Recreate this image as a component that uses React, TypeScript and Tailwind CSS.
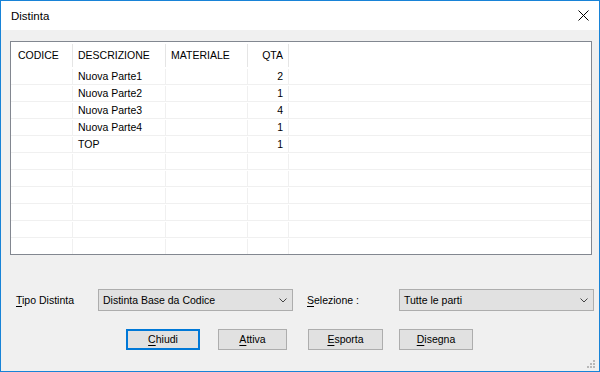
const rows = [
  { codice: "", descr: "Nuova Parte1", mat: "", qta: "2" },
  { codice: "", descr: "Nuova Parte2", mat: "", qta: "1" },
  { codice: "", descr: "Nuova Parte3", mat: "", qta: "4" },
  { codice: "", descr: "Nuova Parte4", mat: "", qta: "1" },
  { codice: "", descr: "TOP", mat: "", qta: "1" },
  ...Array.from({ length: 6 }, () => ({ codice: "", descr: "", mat: "", qta: "" })),
];

function Combo({ value }: { value: string }) {
  return (
    <div className="w-[195px] h-[22px] bg-[#e1e1e1] border border-[#adadad] flex items-center pl-[4px] pr-[5px]">
      <span className="flex-1 pt-[1px]">{value}</span>
      <svg width="8" height="5" viewBox="0 0 8 5">
        <path d="M0.5 0.5 L4 4 L7.5 0.5" fill="none" stroke="#444" strokeWidth="1" />
      </svg>
    </div>
  );
}

function Btn({
  label,
  first,
  w,
  focus,
  className,
}: {
  label: string;
  first: string;
  w: string;
  focus?: boolean;
  className?: string;
}) {
  return (
    <button
      className={`${w} h-[21px] bg-[#e1e1e1] flex items-center justify-center ${
        focus ? "border-2 border-[#0078d7]" : "border border-[#adadad]"
      } ${className ?? ""}`}
    >
      <span className="pt-[1px]">
        <span className="underline underline-offset-2">{first}</span>
        {label}
      </span>
    </button>
  );
}

export default function App() {
  return (
    <div
      className="w-[600px] h-[372px] border border-[#1883d7] bg-[#f0f0f0] flex flex-col text-black relative overflow-hidden"
      style={{ fontFamily: '"Liberation Sans", Arial, sans-serif' }}
    >
      {/* title bar */}
      <div className="h-[29px] bg-white flex items-center justify-between pl-[10px] pr-[10px] shrink-0">
        <span className="text-[11.5px] pt-[2px]">Distinta</span>
        <svg width="11" height="11" viewBox="0 0 11 11">
          <path d="M0.5 0.5 L10.5 10.5 M10.5 0.5 L0.5 10.5" stroke="#000" strokeWidth="1" />
        </svg>
      </div>

      <div className="flex flex-col pl-[9px] pt-[11px] text-[10.5px]">
        {/* list view */}
        <div className="w-[582px] h-[214px] border border-[#828790] bg-white overflow-hidden">
          <div className="flex h-[26px] border-b border-white pt-[2px]">
            <div className="w-[62px] border-r border-[#e5e5e5] flex items-center pl-[7px]">CODICE</div>
            <div className="w-[93px] border-r border-[#e5e5e5] flex items-center pl-[5px]">DESCRIZIONE</div>
            <div className="w-[82px] border-r border-[#e5e5e5] flex items-center pl-[5px]">MATERIALE</div>
            <div className="w-[41px] border-r border-[#e5e5e5] flex items-center justify-end pr-[5px]">QTA</div>
            <div className="flex-1" />
          </div>
          {rows.map((r, i) => (
            <div key={i} className="flex h-[17px] border-b border-[#f0f0f0] pt-[1px]">
              <div className="w-[62px] border-r border-[#f0f0f0] flex items-center pl-[7px]">{r.codice}</div>
              <div className="w-[93px] border-r border-[#f0f0f0] flex items-center pl-[5px]">{r.descr}</div>
              <div className="w-[82px] border-r border-[#f0f0f0] flex items-center pl-[5px]">{r.mat}</div>
              <div className="w-[41px] border-r border-[#f0f0f0] flex items-center justify-end pr-[5px]">{r.qta}</div>
              <div className="flex-1" />
            </div>
          ))}
        </div>

        {/* selectors */}
        <div className="flex items-center mt-[34px] pl-[6px]">
          <span className="w-[82px] pt-[1px]">
            <span className="underline underline-offset-2">T</span>ipo Distinta
          </span>
          <Combo value="Distinta Base da Codice" />
          <span className="w-[92px] ml-[14px] pt-[1px]">
            <span className="underline underline-offset-2">S</span>elezione :
          </span>
          <Combo value="Tutte le parti" />
        </div>

        {/* buttons */}
        <div className="flex mt-[18px] pl-[116px]">
          <Btn first="C" label="hiudi" w="w-[74px]" focus />
          <Btn first="A" label="ttiva" w="w-[69px]" className="ml-[18px]" />
          <Btn first="E" label="sporta" w="w-[75px]" className="ml-[21px]" />
          <Btn first="D" label="isegna" w="w-[74px]" className="ml-[16px]" />
        </div>
      </div>

      {/* size grip */}
      <div className="absolute right-[4px] bottom-[3px] grid grid-cols-3 gap-[1px]">
        <span className="w-[2px] h-[2px]" />
        <span className="w-[2px] h-[2px]" />
        <span className="w-[2px] h-[2px] bg-[#b8b8b8]" />
        <span className="w-[2px] h-[2px]" />
        <span className="w-[2px] h-[2px] bg-[#b8b8b8]" />
        <span className="w-[2px] h-[2px] bg-[#b8b8b8]" />
        <span className="w-[2px] h-[2px] bg-[#b8b8b8]" />
        <span className="w-[2px] h-[2px] bg-[#b8b8b8]" />
        <span className="w-[2px] h-[2px] bg-[#b8b8b8]" />
      </div>
    </div>
  );
}
